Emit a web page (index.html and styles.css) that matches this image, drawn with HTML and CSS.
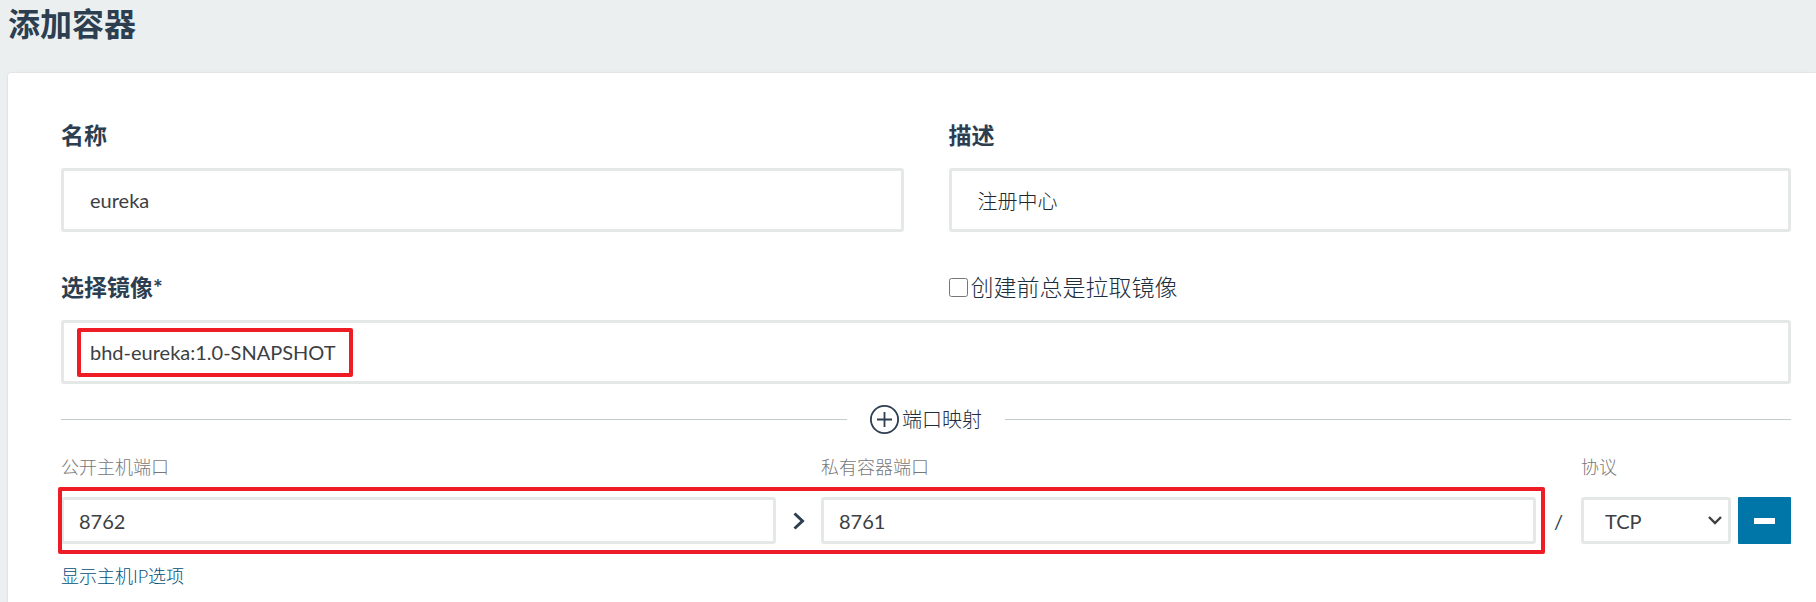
FILE: index.html
```html
<!DOCTYPE html>
<html lang="zh-CN">
<head>
<meta charset="utf-8">
<title>添加容器</title>
<link rel="stylesheet" href="styles.css">
</head>
<body>
<header class="page-header"><h1 class="page-title">添加容器</h1></header>
<main class="panel">
  <form class="form">
    <div class="row">
      <div class="field">
        <label class="label" for="name">名称</label>
        <input class="input" id="name" type="text" value="eureka">
      </div>
      <div class="field">
        <label class="label" for="description">描述</label>
        <input class="input input-light" id="description" type="text" value="注册中心">
      </div>
    </div>
    <div class="image-section">
      <div class="row">
        <label class="label" for="image">选择镜像*</label>
        <div class="check">
          <input class="checkbox" id="pull" type="checkbox">
          <label class="check-label" for="pull">创建前总是拉取镜像</label>
        </div>
      </div>
      <div class="image-box">
        <input class="input" id="image" type="text" value="bhd-eureka:1.0-SNAPSHOT">
        <span class="mark mark-image"></span>
      </div>
    </div>
    <div class="divider">
      <button class="add" type="button">
        <svg class="add-icon" viewBox="0 0 29 29" aria-hidden="true"><circle cx="14.5" cy="14.5" r="13.6"/><path d="M7 14.5h15M14.5 7v15"/></svg>
        <span>端口映射</span>
      </button>
    </div>
    <div class="ports">
      <label class="small-label col-host" for="host-port">公开主机端口</label>
      <label class="small-label col-container" for="container-port">私有容器端口</label>
      <label class="small-label col-protocol" for="protocol">协议</label>
      <input class="input input-small col-host" id="host-port" type="text" value="8762">
      <svg class="arrow" viewBox="0 0 12 18" aria-hidden="true"><path d="m1.500 1.500 8 7.500-8 7.500"/></svg>
      <input class="input input-small col-container" id="container-port" type="text" value="8761">
      <span class="slash">/</span>
      <div class="select-box col-protocol">
        <select class="select" id="protocol"><option>TCP</option><option>UDP</option></select>
        <svg class="chevron" viewBox="0 0 14 9" aria-hidden="true"><path d="m1 1 6 6 6-6"/></svg>
      </div>
      <button class="remove" type="button" aria-label="删除">
        <svg class="minus" viewBox="0 0 21 6" aria-hidden="true"><rect width="21" height="6"/></svg>
      </button>
      <span class="mark mark-ports"></span>
    </div>
    <a class="link" href="#host-ip">显示主机IP选项</a>
  </form>
</main>
</body>
</html>
```
FILE: styles.css
```css
* { box-sizing: border-box; }

body {
  margin: 0;
  min-height: 100vh;
  display: flex;
  flex-direction: column;
  background: #ebefef;
  color: #2c3e50;
  font: 20px/30px Lato, "Noto Sans CJK SC", sans-serif;
}

input, select, button { font: inherit; color: inherit; }

.page-header { padding: 0 8px 25px; }
.page-title { margin: 0; font-size: 32px; line-height: 48px; font-weight: 700; }

.panel {
  flex: 1;
  margin-left: 8px;
  padding: 46px 25px 15px 53px;
  background: #fff;
  border-radius: 3px 0 0 0;
  box-shadow: 0 0 2px rgba(0, 0, 0, 0.15);
}

.form { display: flex; flex-direction: column; }
.row { display: grid; grid-template-columns: 1fr 1fr; column-gap: 45px; }
.field { display: flex; flex-direction: column; gap: 17px; }
.label { font-size: 23px; line-height: 32px; font-weight: 700; }

.input {
  width: 100%;
  min-width: 0;
  height: 64px;
  padding: 0 26px;
  border: 3px solid #e4e9e8;
  border-radius: 3px;
  background: #fff;
  color: #3c4043;
}
.input-light { font-weight: 300; color: #202428; }
.input-small { height: 47px; padding: 0 15px; }

.image-section { display: flex; flex-direction: column; gap: 17px; margin-top: 39px; }
.check { display: flex; align-items: center; gap: 3px; }
.checkbox { width: 19px; height: 19px; margin: 0; }
.check-label { font-size: 23px; line-height: 32px; font-weight: 300; color: #1c2e40; }
.image-box { position: relative; }

.mark { border: 4px solid #ee1c25; border-radius: 2px; pointer-events: none; }
.mark-image { position: absolute; top: 8px; left: 16px; width: 276px; height: 49px; }

.divider { display: flex; align-items: center; gap: 23px; margin-top: 20px; }
.divider::before, .divider::after { content: ""; flex: 1; height: 1px; background: #c5cccc; }
.add {
  display: flex;
  align-items: center;
  gap: 3px;
  padding: 0;
  border: 0;
  background: none;
  font-weight: 300;
  color: #1c2e40;
}
.add-icon { width: 29px; height: 29px; fill: none; stroke: #2c3e50; stroke-width: 1.8; }

.ports {
  display: grid;
  grid-template-columns: 1fr 45px 1fr 45px 150px 60px;
  grid-template-rows: 24px 47px;
  row-gap: 18px;
  margin-top: 21px;
}
.small-label { grid-row: 1; font-size: 18px; line-height: 24px; font-weight: 300; color: #777; }
.col-host { grid-column: 1; }
.col-container { grid-column: 3; }
.col-protocol { grid-column: 5; }
.input-small, .select-box { grid-row: 2; }
.arrow {
  grid-area: 2 / 2;
  place-self: center;
  width: 12px;
  height: 18px;
  fill: none;
  stroke: #2c3e50;
  stroke-width: 3;
}
.slash { grid-area: 2 / 4; place-self: center; }

.select-box { display: grid; align-items: center; }
.select {
  grid-area: 1 / 1;
  width: 100%;
  height: 47px;
  padding: 0 21px;
  border: 3px solid #e4e9e8;
  border-radius: 3px;
  background: #fff;
  color: #3c4043;
  appearance: none;
}
.chevron {
  grid-area: 1 / 1;
  justify-self: end;
  width: 14px;
  height: 9px;
  margin-right: 9px;
  fill: none;
  stroke: #3c4043;
  stroke-width: 2.4;
  pointer-events: none;
}

.remove {
  grid-area: 2 / 6;
  display: grid;
  place-items: center;
  margin-left: 7px;
  padding: 0;
  border: 0;
  border-radius: 1px;
  background: #0075a8;
}
.minus { width: 21px; height: 6px; fill: #fff; }
.mark-ports { grid-area: 2 / 1 / 3 / 4; margin: -10px -9px -10px -3px; z-index: 1; }

.link {
  align-self: flex-start;
  margin-top: 20px;
  font-size: 18px;
  line-height: 24px;
  font-weight: 300;
  color: #005078;
  text-decoration: none;
}
```
